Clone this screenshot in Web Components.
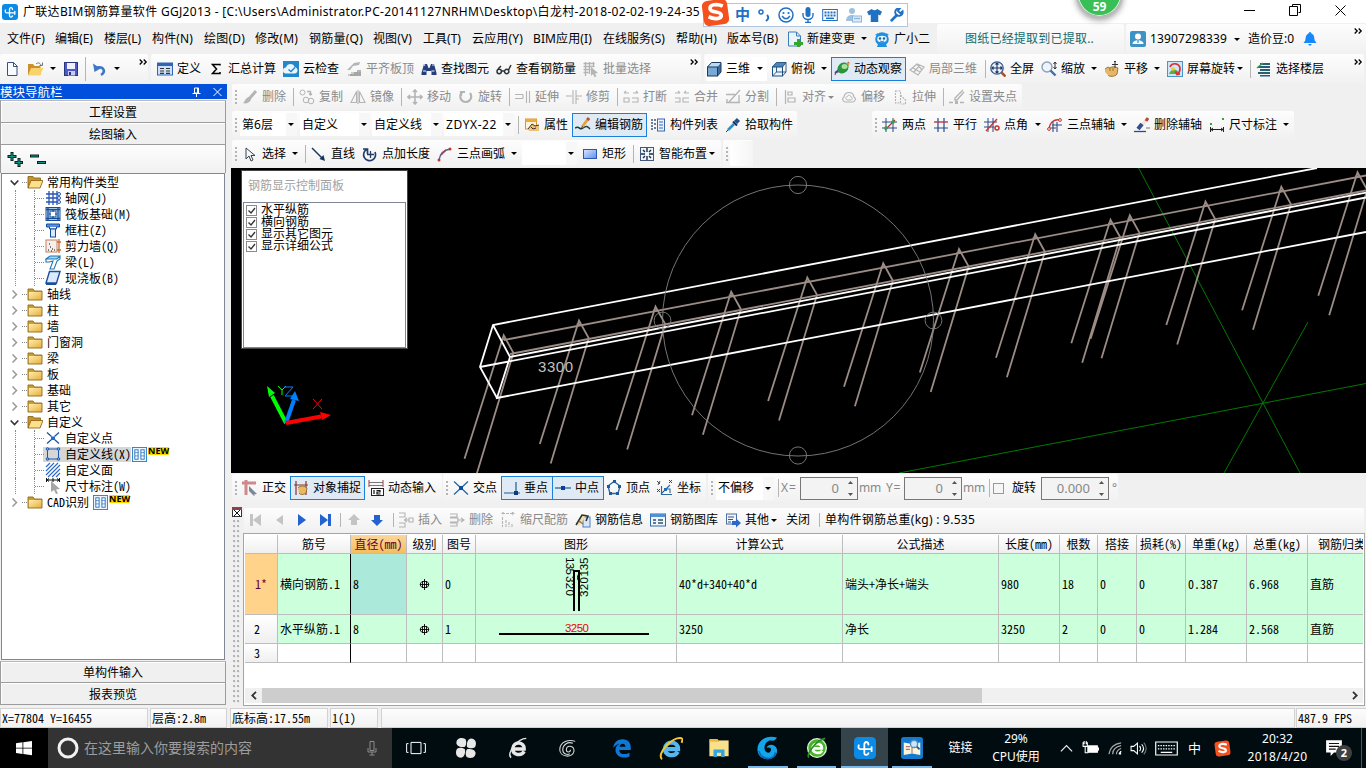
<!DOCTYPE html>
<html lang="zh-CN">
<head>
<meta charset="utf-8">
<title>广联达BIM钢筋算量软件 GGJ2013</title>
<style>
html,body{margin:0;height:100%;overflow:hidden}
body{width:1366px;height:768px;background:#f0f0f0;color:#000;font:12px/16px "Noto Sans","Noto Sans CJK SC",sans-serif}
</style>
</head>
<body>
<app-window></app-window>
<script>
/* ---------- icon library: 16x16 artwork ---------- */
const S=(d,c='#222',w=1.3,x='')=>`<path d="${d}" fill="none" stroke="${c}" stroke-width="${w}" ${x}/>`;
const F=(d,c)=>`<path d="${d}" fill="${c}" fill-rule="evenodd"/>`;
const R=(x,y,w,h,f,s='none')=>`<rect x="${x}" y="${y}" width="${w}" height="${h}" fill="${f}" stroke="${s}"/>`;
const C=(x,y,r,f='none',s='none',w=1)=>`<circle cx="${x}" cy="${y}" r="${r}" fill="${f}" stroke="${s}" stroke-width="${w}"/>`;
const G='#b4b4b4',B='#2a4a8c',RD='#c8342c';
const ICONS={
 app:`<rect width="16" height="16" rx="3" fill="#0b8ae6"/>`+S('M10.500 5.500C10.500 3 7.500 3 7.500 5.500v6c0 2 2.500 2 3 .3M3.500 6c-.8 1.500 0 2.800 1.500 2.800h7.500M12.800 7.300v3','#fff',1.3,'stroke-linecap="round"'),
 new:F('M2.500 1.500h7l4 4v9.500h-11z','#f7faff')+S('M3.500 1.500h6l3.500 3.500v9.500h-9.500z','#3c4f78',1)+S('M9.500 1.500v4h4','#3c4f78',1),
 open:F('M0 3h5l1.500 2h6v9H0z','#c9902f')+F('M3 7h12.500L12 14.500H0z','#f8d36c')+S('M8 3c2-2 4-1 5 1M14.500 1.500v3h-3','#6b7787',1),
 save:R(1.5,1.500,13,13,'#4d5cc4','#29367f')+R(4,2,8,6,'#eef0ff')+R(5,10,7,4.500,'#c7cdf2')+R(6,11,2,3,'#29367f'),
 undo:S('M9 14c5-3 3-9-4-7.500','#3d76c9',2.6)+F('M1 2.500l1.500 8.500 6-3.500z','#3d76c9'),
 def:R(.5,2,15,12,'#cfe0fa','#2f66b4')+R(1,2,14,3,'#2f66b4')+S('M3 7.500h4M3 10h4M3 12.300h4M9 7.500h4M9 10h4M9 12.300h4','#333',1.2),
 sigma:S('M12 4.500v-1H4.500l4 4.500-4 4.500H12v-1.500','#000',1.5),
 cloud:R(0,0,16,16,'#2387cc')+F('M3 12.500a3 3 0 010-6c1-4.500 8-4.500 8.500-.5 4 .5 4 6.500 0 6.500z','#e9f6ff')+S('M5.500 8.500l2.500 2 4-4','#2387cc',1.5),
 flat:F('M1 9l7-7 6-1-1 3-6 1-3 4zM4 15h11V9H11v2H8v2H4z',G)+S('M2 14h13M5 12h10','#8f8f8f',.8),
 binoc:F('M3 3h3l1.500 4h1L10 3h3l2.500 9v2h-5v-4h-5v4H.5v-2z','#263f7c')+S('M3.500 3v2M12 3v2M2 10h3M10.500 10h3','#a9bbe5',1.3),
 glass:S('M1 10.500a2.200 2.200 0 104.400 0 2.200 2.200 0 10-4.400 0M8.500 10.500a2.200 2.200 0 104.400 0 2.200 2.200 0 10-4.400 0M5.400 10h3.100M2 8l3-3M12.500 9l2.500-5','#2c3338',1.5),
 batch:S('M.5 2.500h11M.5 5.500h11M.5 8.500h7M.5 11.500h5M2.500 1v14M6.500 1v12M10.500 1v5',G)+F('M8 6l7 6-3 .5 1.500 3-2 .5-1.500-3-2 2z',G),
 cube:F('M1 6l4-4.500h10L11.500 6z','#b9dcf5')+F('M11.500 6L15 1.500v9.500L11.500 15z','#3a6d9e')+R(1.5,6,10,9,'#79aad5','#1d3a5c')+S('M1.500 6l4-4.500H15v9.500L11.500 15','#1d3a5c',1),
 cubeo:F('M1 6l4-4.500h10L11.500 6z','#4a86bd')+R(1.5,6,10,9,'#e8f3fb','#1f4e7a')+S('M1.500 6l4-4.500H15v9.500L11.500 15M11.500 6L15 1.500M5.500 6v5l-4 4M5.500 11H15','#1f4e7a',.9),
 orbit:S('M1 14c1-6 6-1 10-5s3-7 4-8','#c23a3a',1.2)+S('M1 12l5-4','#354f93',2)+`<ellipse cx="9" cy="7" rx="5" ry="6" transform="rotate(45 9 7)" fill="#2b9440"/><ellipse cx="10.500" cy="5.500" rx="3" ry="2.500" fill="#a8e29b"/>`+S('M13 1.500l2 2','#d3a23a',2),
 orbitd:S('M1 9l7-6 7 3-6 8zM4 7l7 4M8 3l5 6M5 11l6-7',G,1.2),
 full:C(7,7,6.2,'#e6f0fb','#37578d',1.3)+S('M7 2v10M2 7h10M5.500 3.500L7 2l1.500 1.500M5.500 10.500L7 12l1.500-1.500M3.500 5.500L2 7l1.500 1.500M10.500 5.500L12 7l-1.500 1.500','#24365f',1.1)+S('M11.500 11.500l4 4','#a5552c',2.5),
 zoom:C(6,6,5,'#edf5fc','#8ea0b5',1.4)+S('M9.500 9.500l5 5','#3b6fb5',2.4)+S('M14 1v7M12.500 3L14 1l1.500 2M12.500 6L14 8l1.500-2','#333',1),
 pan:F('M1 8l3-2 2 1c2-2 6-1 8 0l-1 6c-2 3-8 3-9 1L1 11z','#e5b766')+S('M1 8l3-2 2 1c2-2 6-1 8 0l-1 6c-2 3-8 3-9 1M6 7v3M9 7v3','#95692a',.9)+S('M11 0v7M8 3.500h6M10 1l1-1 1 1','#333',1),
 rot:R(.5,.5,15,15,'#cfe6f7','#4b94c9')+F('M2 13c2-6 8-6 11 0z','#5aac49')+C(6,8,1.800,'#f3c438')+S('M3 6c2-5 10-4 10 2 0 3-1 4-3 5M8.500 10.500l1.500 3 3-.5','#d93535',1.7),
 floor:F('M4 2h10v2H4zM2 5h12v2H2zM4 8h10v2H4zM2 11h12v2H2zM4 14h10v1.500H4z','#285f73')+S('M1 7l6-5','#3aa04a',1.5),
 brush:S('M14 2L7 10',G,3)+F('M7 8l2 3c-2 3-5 4-8 3 2-1 2-5 6-6z',G),
 copy:C(3.5,3.500,2.500,'none',G)+C(7,11,2.800,'none',G)+C(12,12,2.800,'none',G)+S('M8 2.500h3.500V6M10 4.500L11.500 6 13 4.500',G),
 mirror:S('M6.500 2.500v11H1zM9.500 2.500v11H15zM8 1v14',G,1.1),
 move:S('M8 1v14M1 8h14M6 3l2-2 2 2M6 13l2 2 2-2M3 6L1 8l2 2M13 6l2 2-2 2',G,1.6),
 rotate:S('M4 3.500A5.500 5.500 0 1012 4M3 7V3h4',G,2.2),
 extend:S('M0 5.500h8M0 9.500h8M8 5.500v4M11.500 2v12M14.500 2v12',G,1.1),
 trim:S('M0 7h6M7 1v14M10 1v14M10 7h6M10 10h3',G,1.1),
 brk:S('M1 4h5M1 4l2-2M15 4h-5M15 4l-2-2M1 9h5v4H1zM9 9h6v4H9',G,1.1),
 join:S('M1 4h5M6 4L4 2M15 4h-5M10 4l2-2M1 9h5v4H1M15 9H9v4h6',G,1.1),
 split:S('M1 5.500h9M1 13.500h14M2 13v-3M14 6v7M15 1L4 13',G,1.3),
 align:S('M3.500 1v14M6 3h4v3H6zM6 9h7v4H6z',G,1.2),
 offset:S('M4 13h8c3-1 3-4 1-5-1-6-9-6-10 0-2 1-2 4 1 5z',G,1.2)+S('M6 11h4c2-1 1-3 0-3-.5-2.500-3.500-2.500-4 0-1 0-2 2 0 3z',G,1),
 stretch:S('M3.500 2h5v12h-5zM8.500 6l5 5v4h-5',G,1.1,'stroke-dasharray="2 1"'),
 grip:S('M14 1L6 9v2h2l7-8',G,1.4)+R(6,12,3,3,G)+S('M0 13.500h4M11 13.500h4',G),
 prop:R(1.5,2,11,10,'#fff3d8','#d89530')+R(1.5,2,11,3,'#f4a83a')+F('M4 12l4-5 3 2 4-1v6H5z','#efc27c')+S('M4 12l4-5 3 2 4-1M7 10l2 2 3-1','#3c3325',1),
 edit:S('M0 11c5-3 4 3 8 0s5-1 7 1','#223b35',1.5)+S('M13 2L7 10','#e1a43b',2.8)+S('M14 1l-1.500 2','#b44c3d',3)+S('M7.500 9.500L6 12','#333',1),
 list:S('M1 3h2M1 6h2M1 9h2M1 12h2M4 3h2M4 7h2M4 11h2','#3b5680',1.5)+R(7.5,2,7,12,'#eaf3ff','#3b68aa')+S('M9 5h4M9 8h4M9 11h4','#3b68aa',1),
 pick:S('M3 13L9 7','#2f8fcd',2.6)+S('M8 4.500l4 4','#1c3357',2)+S('M10.500 5.500L13.500 2.500','#26508c',4.500)+S('M1 15l2-2','#333',1),
 ax2:S('M0 5h15M0 11h15M4 1v14M11 1v14',B,1)+S('M3 13L13 3','#a63838',1.2)+C(4,11,1.800,'#33a03c')+C(11,5,1.800,'#33a03c'),
 axp:S('M1 11h14M5 1v14M11 1v14',B,1.2)+S('M1 5h14','#b23c48',1.4),
 axa:S('M0 5h13M0 10h10M4 1v14M9 1v14',B,1)+S('M2 14L13 2',RD,1.3)+C(13,11,2,'none',RD,1.5),
 ax3:S('M5 8h10M1 11h8M6 4v11M10 5v10',B,1.1)+S('M2 12C3 5 7 2 13 3',RD,1.4)+C(2,12,1.400,'#fff',RD)+C(13,3,1.400,'#fff',RD),
 axd:S('M13 2L7 9','#f1e4d4',3)+S('M14 1l-2 3','#b7463a',3)+S('M8 7l-4 5','#314e93',4)+S('M0 14.500h12',B,1.3)+S('M12 11h4','#777',1),
 dim:S('M1.500 10v5M14.500 10v5M2 12.500h12M4 11l-2 1.500L4 14M12 11l2 1.500-2 1.500','#222',1)+R(1,6,2,2,'#35a442')+R(13,1,2,2,'#35a442'),
 cursor:S('M4 2v11l3-3 2 5 2-1-2-4.500h4z','#39424f',1),
 line:S('M1 2l11 11','#17355a',1.4)+F('M14 15L8.500 13l4-4z','#17355a'),
 addlen:S('M4.500 3.500A6 6 0 1013 6M1 3h4.500v5','#243c6a',1.7)+S('M8.500 5v7M5 8.500h7','#243c6a',1.3),
 arc:S('M2 14C3 8 6 4 13 3','#3a6bb0',1.4)+S('M4 9L9 4',RD,1.4)+C(2,14,1.500,RD)+C(13,3,1.500,RD),
 rect:`<defs><linearGradient id="g" x2="1" y2="1"><stop stop-color="#dce9ff"/><stop offset="1" stop-color="#5a8df0"/></linearGradient></defs>`+R(1.5,3.500,13,9,'url(#g)','#2d57b3'),
 smart:R(1.5,1.500,13,13,'#eef4fb','#43597c')+S('M8 2v4M8 10v4M2 8h4M10 8h4M4 4l2 2M12 4l-2 2M4 12l2-2M12 12l-2-2','#1c2b44',1.4),
 ortho:S('M0 3h14M4 0v15','#d0898a',3)+F('M7 6l8 8-3 .5 1 2-2-1.500L7 11z','#7a8899'),
 snap:S('M1 5h14M3 1v14M13 1v14','#8a3030',1.2)+F('M5 8c2-3 7-2 9 0l-1 5c-2 2-6 2-7 0z','#e8b95d')+S('M5 8c2-3 7-2 9 0l-1 5c-2 2-6 2-7 0','#87642e',.8),
 dyn:S('M1 0v7M15 0v7','#9a3a3a',1)+S('M1 2.500h14M1 5.500h14','#777',1)+R(3.5,8.500,12,7,'#fff','#222')+S('M6 10v4M8.500 10.500h3.500v1.500H9v2h3.500','#111',1.2),
 cross:S('M1 1.500l14 13M15 1.500L1 14.500','#26639d',1.2)+R(6,6,4,4,'#0d4da3'),
 perp:S('M0 13h16M12 2v11','#1d5a96',1.2)+R(10,11,4,4,'#0d3c7d'),
 mid:S('M0 8h16','#1d5a96',1.2)+R(6,6,4,4,'#0d3c9d'),
 vert:S('M8 1.500l6 4.500-2 7.500H4L2 6z','#2f669c',1.3)+R(7,0,3,3,'#1d5a96')+R(1,5,3,3,'#1d5a96')+R(12,5,3,3,'#1d5a96')+R(3,12,3,3,'#1d5a96')+R(10,12,3,3,'#1d5a96'),
 coord:S('M4.500 6v8.500H15M4 14L13 5M8 9h5v4','#2f669c',1.1)+S('M0 1l3 3M3 1L1 5M0 9l3 3M3 9l-3 3M12 0l3 3M15 0l-3 3','#333',.9)+R(7,8,3,3,'#236cb4'),
 first:F('M3 2h3v12H3zM14 2v12L6 8z','#c4c4c4'), prev:F('M12 3v10L5 8z','#c4c4c4'),
 next:F('M4 2v12l8-6z','#2463cf'), last:F('M2 2v12l8-6zM10 2h3v12h-3z','#2463cf'),
 up:F('M8 2l6 6h-3v5H5V8H2z','#c4c4c4'), down:F('M8 14l6-6h-3V3H5v5H2z','#2463cf'),
 ins:S('M1 1h6v4H1M1 11h6v4H1M6 8h5M9 6L6.500 8 9 10M11 6h4v4h-4z',G,1.1),
 del:S('M1 2h7v3H1M1 11h7v3H1M1 6h8v4H1M8 8h7M12 6l3 2-3 2',G,1.2),
 scale:S('M2 1.500h12M3.500 0L2 1.500 3.500 3M12 0l2 1.500L12 3M2.500 5v10M6 8v7M9 10v5M12 12v3',G,1.1,'stroke-dasharray="3 1"'),
 info:R(8,5,7,10,'#d7e6fb','#4e7fc0')+F('M1 12l5-9 5-1-2 5-5 7z','#f2dfaf')+S('M1 13L7 3l6 1-2 5','#26322f',1.5)+S('M4 9l4 3','#b66b29',1.5),
 lib:R(.5,2,15,12,'#edf5ff','#3469a8')+R(.5,2,15,3,'#5291d8')+S('M3 8h3M3 11h3M8 8h5M8 11h5','#356',1.3),
 other:R(1.5,2,10,10,'#eef5ff','#4a6fa0')+S('M3 5h6M3 7.500h5M3 10h3','#456',1)+F('M7 9h4V6.500L16 11l-5 4.500V13H7z','#2c68ca'),
 newchg:F('M1.500 1h8l4 4v10h-12z','#e9f4ff')+S('M1.500 1h8l4 4v10h-12zM9.500 1v4h4','#3c7cb8',1)+F('M10 8h3v3h3v3h-3v3h-3v-3H7v-3h3z','#35a828'),
 robot:C(8,8,6.800,'#1f8fe0')+F('M1 4l3-2 1 3zM15 4l-3-2-1 3zM4 13h8l1 3H3z','#1f8fe0')+`<ellipse cx="8" cy="8" rx="4.800" ry="3.200" fill="#e6f6ff"/>`+C(6,7.500,1.200,'#1763a0')+C(10,7.500,1.200,'#1763a0')+S('M6 10q2 1.500 4 0','#1763a0',.8),
 user:`<rect width="16" height="16" rx="2" fill="#3e93c6"/>`+C(8,5.500,3,'#fff')+F('M2.500 13c0-5 11-5 11 0z','#fff')+S('M8 9v3','#3e93c6'),
 bell:F('M8 1c1 0 1 1 1.500 1.500C13 4 12 8 13 10l1.500 2h-13L3 10c1-2 0-6 3.500-7.500C7 2 7 1 8 1z','#1787fb')+F('M6 13h4l-2 2z','#1787fb'),
 /* tree */
 fold:F('M1 3h5l1.500 2H15v9H1z','#d49b2b')+`<defs><linearGradient id="f" x2="1" y2="1"><stop stop-color="#fff0b0"/><stop offset="1" stop-color="#e5ad35"/></linearGradient></defs>`+F('M1.500 6H15v8H1.500z','url(#f)')+S('M1 3h5l1.500 2H15v9H1z','#8c691e',.9),
 foldo:F('M1 2.500h5L7.500 4h6v10H1z','#c8932d')+F('M4 6.500h12L13 14H1z','#ffe08a')+S('M1 14V2.500h5L7.500 4h6v2.500H16L13 14zM1 14l3-7.500h10','#8c691e',.9),
 grid:S('M1 4h11M1 8h11M1 12h11M4 1v14M8 1v14M12 1v14','#2a55b5',1.3)+C(14,4,1.500,'none','#2a55b5')+C(14,8,1.500,'none','#2a55b5')+C(14,12,1.500,'none','#2a55b5'),
 raft:R(1,1.500,14,13,'#deecff','#134f9b')+R(5,5,6,6,'#fff','#134f9b')+S('M1 3.500h14M1 12.500h14M3 2v12M13 2v12','#134f9b',1.4)+S('M8 4v2M8 10v2M4 8h2M10 8h2','#134f9b',1.2),
 col:F('M1 2h14v3H1z','#5b8ce0')+S('M1.500 2h13v3h-3v2h-7V5h-3z','#134f9b',1)+R(5.5,7,5,8,'#dbe8fc','#134f9b'),
 wall:R(1,2,11,12,'#f5efeb','#c97d64')+S('M3 12h1M5 9h1M7 11h1M4 6h1M9 12h1M6 13h1','#555')+S('M14 1v14M12 4h4M12 12h4','#c26d32',1.3),
 beam:F('M1 5l4-3h10l-3 3z','#9ed5f5')+S('M1 5l4-3h10l-3 3zM1 5v3h3l4-1-3 8h4l3-8 3-2V2','#2078b6',1.1),
 slab:F('M4 2h10l-3 11H1z','#dceaff')+S('M4.500 1.500H15L11.500 13H1z','#1b4f9c',1.4)+F('M1 13h11l-1 2H1z','#1b4f9c'),
 pt:S('M2 2.500l4.500 4M14 2.500l-4.500 4M2 13.500l4.500-4M14 13.500l-4.500-4','#1b4f9c',1.2)+R(6,6.500,4,3.500,'#1b6fc9'),
 ln:R(2.5,3,11,10,'none','#1a58b0')+C(2.5,3,1.300,'#7ab3f0','#1a58b0')+C(13.5,3,1.300,'#7ab3f0','#1a58b0')+C(2.5,13,1.300,'#7ab3f0','#1a58b0')+C(13.5,13,1.300,'#7ab3f0','#1a58b0'),
 sf:S('M1 5l4-4M1 9l8-8M1 13l12-12M3 15L15 3M7 15l8-8M11 15l4-4','#2a6bc0',1.1),
 dimt:S('M1.500 0v4M14.500 0v4M2 2h12M4 .5L2 2l2 1.500M12 .5L14 2l-2 1.500M8 0v4','#111',1)+F('M6 3l9 8-4 .5 2 4-2 .5-2-4-3 2z','#a6a6a6'),
 book:R(.5,.5,15,15,'#eaf5ff','#2f7fc4')+R(3,3,3.500,10,'#fff','#2d73bd')+R(9.500,3,3.500,10,'#fff','#2d73bd')+S('M3 6h3.500M3 9.500h3.500M9.500 6H13M9.500 9.500H13','#2d73bd',.8),
 plus2:S('M5 0v9M.5 4.500h9M12 6v9M7.500 10.500h8.500','#05241f',3)+S('M5 1v7M1.500 4.500h7M12 7v7M8.500 10.500h6.500','#129488',1.200),
 minus2:S('M0 4h9M7 10.500h9','#05241f',3)+S('M1 4h7M8 10.500h7','#129488',1.2),
 /* task bar */
 win:F('M0 3.200l6.500-.9V7.700H0zM7.300 2.200L16 1v6.700H7.300zM0 8.400h6.500v5.500L0 13zM7.300 8.400H16V15.200l-8.700-1.200z','#fff'),
 tview:S('M4 3.500h8v9H4zM2 4.500H.5v7H2M14 4.500h1.500v7H14','#fff',.8),
 fan:F('M1 4.500C1 .5 5 0 7.500 1.500 8.500 3 8.500 6 7 7.300 4.500 7.500 1.500 7 1 4.500zM11.500 1C15.500 1 16 5 14.500 7.500c-1.500 1-4.500 1-5.800-.5C8.500 4.500 9 1.500 11.500 1zM15 11.500c0 4-4 4.500-6.500 3C7.500 13 7.500 10 9 8.700c2.500-.2 5.500.3 6 2.800zM4.500 15C.5 15 0 11 1.500 8.500c1.500-1 4.500-1 5.800.5.2 2.500-.3 5.500-2.800 6z','#e8e8e8'),
 e360w:S('M4 8.700h8.500C13 3.500 4.500 2.500 4.200 8.500c0 5 6.300 5.500 8.300 2','#e8e8e8',2.5)+S('M3 15C-1 12 8 1 14 1','#e8e8e8',1),
 gline:S('M14.500 2c-5-2-13 0-13 7 0 6.500 11 7.500 12 1 0-4.500-6.500-5.500-6.500-1 0 2.500 3.500 2.500 3.500 0M12.500 3.500C8 2 4 5 4 9s4 4.500 6 3.500','#d8d8d8',.9),
 edge:F('M1 8C1.500 3.500 4.500 1 8.500 1c4.500 0 6.500 3 6.500 6.500V9.500H5.800c.2 4 5.200 4 8.200 2.200v3C9 17 3 15 2.800 9.800 2.700 7.300 4 5.500 6 4.500 4 4.800 2.200 6 1 8zM6 7h4.800C10.800 3.900 6.500 3.900 6 7z','#0f78d7'),
 ie:S('M4 8.700h8.700C13 3.500 4.500 2.500 4 8.500c0 5 6.500 5.500 8.500 2','#56b6ee',2.9)+S('M2 15.500C-2 12 9 0 15 1.500c1 .5.5 2 0 3','#f3c736',1.3),
 file:R(1,2.500,14,11.500,'#fbe08c')+F('M1 1.500h6l1 2H1z','#edb83c')+F('M4 14.500V9h8v5.500H9.500v-3h-3v3z','#2fa6e0'),
 gblue:F('M14 1C7-1 1 3 1 9c0 9 14 8 13 0-1-4-6-4-7-1 3-1 4 1 2 3-4 1-5-6 0-8 2 0 3 1 5-2z','#14a4ea')+S('M2 10c1 6 10 7 11 1','#0b66b9',1.2),
 e360:C(8,8,6.800,'#47b429','#dff4d7',1)+S('M4.500 8.300h7C12 4 5 4 4.800 8c0 4 5.200 4.500 7 2','#fff',2)+S('M2 15C0 12 8 2 14 1','#2a8e23',1.2),
 reader:`<rect width="16" height="16" rx="2" fill="#147ad0"/>`+F('M2 4l6 1 6-1v9l-6-1-6 1z','#fff6da')+S('M8 5v7M3.500 7h3M3.500 9h3','#a77',.8)+C(9.5,5,2.600,'#cce7f8','#4a91c8')+S('M11.500 7l2 2','#2a5f96',1.5),
 mic:S('M6 1.500h4v9H6zM4 8v4h8V8M8 12v3M5.500 15h5','#8c8c8c',1),
 chev:S('M2 11l6-6 6 6','#eee',1.3),
 plug:R(5.5,5.500,9,6,'#fff','#fff')+R(15,7,1,3,'#fff')+S('M5 2v4H1V2M3 6v6h3M2 1v3M4 1v3','#fff',1),
 wifi:S('M1 14C2 7 7 3 14 2M5 14c0-5 4-8 9-9M9 14c0-3 2-5 5-6','#aaa',1.3)+S('M12 14c0-1 1-2 2-3M12 13.500h2','#fff',1.600),
 snd:S('M1 6h2.500L7 3v10L3.500 10H1zM9 5.500q2 2.500 0 5M11 4q3.500 4 0 8','#fff',1)+S('M13 2.500q4.500 5.500 0 11','#777',1),
 kbd:S('M.5 3.500h15v9H.5z','#fff',.8)+S('M2 6h12M2 8.300h12','#fff',.9,'stroke-dasharray="1 .8"')+S('M4 10.700h8','#fff',.9),
 sogou:`<rect x="1" y="1" width="14" height="14" rx="3" fill="#f4511e" transform="rotate(-8 8 8)"/>`+S('M12 4.500C9 3 4.500 3.500 5 6c.5 2.500 6 1 6.200 3.500.2 2.200-4 2.500-7 .8','#fff',2),
 note:F('M1 1h14v11H8l-3 3v-3H1z','#fff')+S('M3.500 4h9M3.500 6.500h9M3.500 9h6','#111',1),
 smile:C(8,8,7,'none','#2070c4',1.500)+C(5.500,6,1.100,'#2070c4')+C(10.500,6,1.100,'#2070c4')+S('M4 9q4 5.500 8 0','#2070c4',1.400),
 mic2:`<rect x="5.500" y="0" width="5" height="10" rx="2.500" fill="#2070c4"/>`+S('M3 6v2c0 6 10 6 10 0V6M8 12v4M5 15.500h6','#2070c4',1.400),
 kb2:R(.7,2.500,14.600,11,'none','#2070c4')+S('M2.500 5.500h12M2.500 8.500h12','#2070c4',1.800,'stroke-dasharray="2 1"')+S('M4 11.300h8','#2070c4',1.500),
 usr2:C(6,4,3,'#9ec0e2')+F('M0 14c0-8 11-8 11 0z','#9ec0e2')+R(6.5,9,9,6,'#dcebf8','#8fb4da')+S('M8 11.500h6','#8fb4da'),
 shirt:F('M0 4l5-3q3 3 6 0l5 3-2 4-2-1v8H4V7L2 8z','#2070c4'),
 wrench:S('M2 14l7-7','#2070c4',3)+S('M14.500 3.500a4 4 0 11-3-3l-2 2.500 2.500 2.500z','#2070c4',2)
};
const icon=(n,s=16)=>`<svg class="ic" width="${s}" height="${s}" viewBox="0 0 16 16">${ICONS[n]||''}</svg>`;
const CARET='<svg class="ca" width="6" height="3" viewBox="0 0 6 3"><path d="M0 0h6L3 3z" fill="currentColor"/></svg>';
const FLAT='linear-gradient(#fdfdfd,#f1f1f1)';

function define(name,css,html,after){
  customElements.define(name,class extends HTMLElement{
    connectedCallback(){
      if(this.shadowRoot)return;
      const r=this.attachShadow({mode:'open'});
      r.innerHTML=`<style>*{box-sizing:border-box}svg{display:block;flex:none}${css}</style>${typeof html==='function'?html(this):html}`;
      if(this.hasAttribute('w'))this.style.width=this.getAttribute('w')+'px';
      if(this.hasAttribute('m'))this.style.marginLeft=this.getAttribute('m')+'px';
      if(after)after(this,r);
    }
  });
}
/* adjusts tracking so a label fills the width given by its fit attribute */
function fit(host,node){
  const want=+host.getAttribute('fit'); if(!want)return;
  const n=host.textContent.length, nat=node.getBoundingClientRect().width;
  if(nat)node.style.letterSpacing=((want-nat)/n).toFixed(3)+'px';
}
const isText=el=>el.textContent.trim().length>0;

define('tool-b',`
:host{display:flex;align-items:center;flex:none;height:100%;box-sizing:border-box;white-space:nowrap}
:host([d]){color:#8a8a8a}
:host([on]){border:1px solid #1a80d9;background:#dfeaf5;padding-left:2px;height:24px;align-self:center}
:host([box]){background:#fff}
.t{display:inline-block}.t.p{margin-left:4px}`,
 el=>{const i=el.getAttribute('i');return (i?icon(i):'')+(isText(el)?`<span class="t ${i?'p':''}"><slot></slot></span>`:'')+(el.hasAttribute('c')?`<span style="margin-left:${el.getAttribute('c')}px">${CARET}</span>`:'')},
 (el,r)=>{const t=r.querySelector('.t');if(t)fit(el,t)});
define('fit-text',`:host{display:block;flex:none;white-space:pre}.t{display:inline-block}`,'<span class="t"><slot></slot></span>',(el,r)=>fit(el,r.querySelector('.t')));
define('tool-sep',`:host{display:block;flex:none;height:18px;align-self:center}:host::before{content:"";display:block;width:1px;height:100%;background:#b5b5b5}`,'');
define('tool-grip',`:host{display:flex;flex:none;height:100%;align-items:center;padding-left:3px;box-sizing:border-box}i{width:2px;height:14px;background:repeating-linear-gradient(#b4b4b4 0 2px,transparent 2px 4px)}`,'<i></i>');
define('tool-more',`:host{display:block;flex:none;align-self:flex-start;padding-top:5px}`,`<svg width="9" height="6" viewBox="0 0 9 6"><path d="M.7.500L3.200 3 .7 5.500M4.700.500L7.200 3 4.700 5.500" fill="none" stroke="#000" stroke-width="1.300"/></svg>`);
define('tool-combo',`:host{display:flex;flex:none;box-sizing:border-box;height:23px;align-self:center;background:#fff;align-items:center;padding-left:2px;white-space:nowrap}.t{display:inline-block}b{margin-left:auto;width:11px;height:100%;background:#f7f7f7;display:flex;align-items:center;justify-content:flex-start;padding-left:2px}`,
 `<span class="t"><slot></slot></span><b>${CARET}</b>`,(el,r)=>fit(el,r.querySelector('.t')));
define('tool-spin',`:host{display:flex;flex:none;box-sizing:border-box;height:23px;align-self:center;border:1px solid #777;background:#f3f3f3;color:#888;align-items:center;justify-content:flex-end}
.t{margin-right:9px;font-size:13px}.a{display:flex;flex-direction:column;gap:9px;margin-right:4px}`,
 `<span class="t"><slot></slot></span><span class="a"><svg width="5" height="3"><path d="M0 3h5L2.500 0z" fill="#555"/></svg><svg width="5" height="3"><path d="M0 0h5L2.500 3z" fill="#555"/></svg></span>`);
define('tool-panel',`:host{display:flex;align-items:center;flex:none;height:100%;background:${FLAT};box-sizing:border-box;border-radius:2px}`,'<slot></slot>');
define('tool-row',`:host{display:flex;flex:none;box-sizing:border-box}`,'<slot></slot>',el=>{el.style.height=el.getAttribute('h')+'px'});

/* ---------- title bar ---------- */
define('title-bar',`:host{display:flex;position:relative;height:23px;background:#fff;align-items:center;flex:none}
.app{margin:0 5px 0 2px}.win{display:flex;margin-left:auto;margin-right:20px;gap:34px;align-items:center;margin-top:-3px}
.ime{position:absolute;z-index:3;left:703px;top:3px;width:205px;height:24px;background:#fff;border:1px solid #b3c7de;display:flex;align-items:center;color:#2070c4}
.ime .s{margin:-5px 5px 0 -3px}.ime .z{font:bold 15px/16px "Noto Sans CJK SC";margin-right:8px;margin-top:-2px}
.ball{position:absolute;z-index:3;left:1076px;top:-29px;width:47px;height:47px;box-sizing:border-box;border-radius:50%;border:2px solid #b9bcb9;background:#38bf55;box-shadow:0 0 0 1px #eee inset,0 2px 6px #0006;color:#fff;font-weight:bold;display:flex;justify-content:center;padding-top:26px}`,
`<span class="app">${icon('app')}</span><fit-text fit="677">广联达BIM钢筋算量软件 GGJ2013 - [C:\\Users\\Administrator.PC-20141127NRHM\\Desktop\\白龙村-2018-02-02-19-24-35</fit-text>
<div class="win"><svg width="11" height="11"><path d="M0 5.500h11" stroke="#000"/></svg><svg width="12" height="12"><path d="M3.500 2.500v-2h8v8h-2M.5 2.500h8v9h-8z" fill="none" stroke="#000"/></svg><svg width="11" height="11"><path d="M.5.500l10 10M10.500.500l-10 10" stroke="#000"/></svg></div>
<div class="ime"><span class="s">${icon('sogou',29)}</span><span class="z">中</span><svg width="12" height="16" style="margin-right:8px"><circle cx="3" cy="5" r="2" fill="none" stroke="#2070c4" stroke-width="1.500"/><path d="M9 8q3 3-1 6" stroke="#2070c4" stroke-width="2" fill="none"/></svg>${icon('smile')}<span style="width:6px"></span>${icon('mic2')}<span style="width:6px"></span>${icon('kb2')}<span style="width:8px"></span>${icon('usr2')}<span style="width:5px"></span>${icon('shirt',15)}<span style="width:7px"></span>${icon('wrench',15)}</div>
<div class="ball">59</div>`);

define('menu-bar',`:host{display:flex;flex:none;height:31px;align-items:center;padding-left:7px}
tool-panel{height:30px;margin-top:1px}.q{color:#0f6b6b}`,()=>{
 const m=[['文件(F)',48,38],['编辑(E)',49,38],['楼层(L)',48,37],['构件(N)',52,41],['绘图(D)',51,41],['修改(M)',54,43],['钢筋量(Q)',64,54],['视图(V)',50,39],['工具(T)',49,38],['云应用(Y)',61,51],['BIM应用(I)',70,59],['在线服务(S)',73,62],['帮助(H)',51,41],['版本号(B)',60,51]];
 return m.map(a=>`<tool-b w="${a[1]}" fit="${a[2]}">${a[0]}</tool-b>`).join('')+
 `<tool-b i="newchg" w="87" c="6">新建变更</tool-b><tool-b i="robot" w="63">广小二</tool-b>
 <tool-panel w="187"><tool-b class="q" m="28" fit="129">图纸已经提取到已提取..</tool-b></tool-panel>
 <tool-panel m="2" w="240"><tool-b m="4" w="118" i="user" fit="77" c="7">13907298339</tool-b><tool-b fit="46" w="54">造价豆:0</tool-b><tool-b i="bell" w="52"></tool-b><tool-more w="9" style="padding-top:4px"></tool-more></tool-panel>`});

define('main-tools',`:host{display:flex;flex:none;height:30px}tool-row{padding-bottom:1px}`,
`<tool-row h="30"><tool-panel w="148"><tool-b m="4" i="new" w="24"></tool-b><tool-b i="open" c="6" w="35"></tool-b><tool-b i="save" w="22"></tool-b><tool-sep style="height:24px" w="7"></tool-sep><tool-b i="undo" c="6" w="47"></tool-b><tool-more></tool-more></tool-panel>
<tool-panel m="3" w="550"><tool-b m="6" i="def" w="51">定义</tool-b><tool-b i="sigma" w="75">汇总计算</tool-b><tool-b i="cloud" w="63">云检查</tool-b><tool-b d i="flat" w="75">平齐板顶</tool-b><tool-b i="binoc" w="75">查找图元</tool-b><tool-b i="glass" w="87">查看钢筋量</tool-b><tool-b d i="batch" w="107">批量选择</tool-b><tool-more></tool-more></tool-panel>
<tool-panel m="3" w="660"><tool-b m="2" box i="cube" c="7" w="61" style="height:24px">三维</tool-b><tool-b m="4" i="cubeo" c="6" w="60">俯视</tool-b><tool-b on i="orbit" w="75">动态观察</tool-b><tool-b m="3" d i="orbitd" w="76">局部三维</tool-b><tool-sep w="5"></tool-sep><tool-b i="full" w="51">全屏</tool-b><tool-b i="zoom" c="6" w="63">缩放</tool-b><tool-b i="pan" c="6" w="63">平移</tool-b><tool-b i="rot" c="2" w="83">屏幕旋转</tool-b><tool-sep w="6"></tool-sep><tool-b i="floor" w="98">选择楼层</tool-b><tool-more></tool-more></tool-panel></tool-row>`);

define('edit-tools',`:host{display:flex;flex-direction:column;flex:none;height:84px}tool-row{margin-bottom:1px}tool-row+tool-row{margin-bottom:2px}tool-row:last-of-type{margin:0}`,
()=>{const t=(i,l,w=51,x='')=>`<tool-b i="${i}" w="${w}" ${x}>${l}</tool-b>`,d=(i,l,w=51,x='')=>t(i,l,w,'d '+x),s='<tool-sep w="6"></tool-sep>',g='<tool-grip w="10"></tool-grip>';
return `<tool-row h="26"><tool-panel w="790">${g}${d('brush','删除')}${s}${d('copy','复制')}${d('mirror','镜像')}${s}${d('move','移动')}${d('rotate','旋转')}${s}${d('extend','延伸')}${d('trim','修剪')}${s}${d('brk','打断')}${d('join','合并')}${d('split','分割')}${s}${d('align','对齐',59,'c="2"')}${d('offset','偏移')}${d('stretch','拉伸')}${s}${d('grip','设置夹点',73)}</tool-panel></tool-row>
<tool-row h="27"><tool-panel w="565"><tool-grip w="8"></tool-grip><tool-combo w="57" fit="31">第6层</tool-combo><tool-combo m="3" w="70">自定义</tool-combo><tool-combo m="2" w="70">自定义线</tool-combo><tool-combo m="2" w="70" fit="51">ZDYX-22</tool-combo><tool-sep m="4" w="6"></tool-sep>${t('prop','属性',48)}${t('edit','编辑钢筋',75,'on')}${t('list','构件列表',75,'m="3"')}${t('pick','拾取构件',72)}</tool-panel>
<tool-panel m="75" w="422">${g}${t('ax2','两点')}${t('axp','平行')}${t('axa','点角',63,'c="7"')}${t('ax3','三点辅轴',87,'c="6"')}${t('axd','删除辅轴',75)}${t('dim','尺寸标注',85,'c="6"')}</tool-panel></tool-row>
<tool-row h="27"><tool-panel w="489">${g}${t('cursor','选择',63,'c="6"')}${s}${t('line','直线')}${t('addlen','点加长度',75)}${t('arc','三点画弧',85,'c="6"')}<tool-combo w="55"></tool-combo>${t('rect','矩形',51,'m="5"')}${s}${t('smart','智能布置',81,'c="2"')}</tool-panel><tool-panel m="2" w="30"><tool-grip w="7"></tool-grip><span style="width:23px;height:25px;background:linear-gradient(90deg,#fff,#f5f5f5)"></span></tool-panel></tool-row>`});

/* ---------- module navigator ---------- */
define('module-nav',`:host{display:flex;flex-direction:column;flex:none;width:227px;height:622px;background:#f0f0f0;font-family:"Noto Sans CJK SC",sans-serif;font-feature-settings:"hwid"}
header{height:15px;background:#0050dc;color:#fff;display:flex;align-items:center;flex:none;font-size:12.500px}
header .g{margin-left:auto;display:flex;gap:12px;padding-right:5px}
.bar{height:22px;flex:none;border:1px solid #9c9c9c;border-top-color:#b8b8b8;margin-top:0;width:226px;display:flex;align-items:center;justify-content:center;box-shadow:inset 1px 1px #fff;background:#f0f0f0}
.bar+.bar{border-top:0}
.mini{height:28px;width:226px;border:1px solid #9c9c9c;border-width:0 1px;background:${FLAT};flex:none;display:flex;gap:7px;padding:7px 0 0 6px}
.tree{flex:1;width:224px;margin-left:1px;border:1px solid #7f8794;background:#fff;overflow:hidden}
.r{height:16px;display:flex;align-items:center;white-space:nowrap}
.ch{width:12px;margin-left:6px;display:flex;justify-content:center}
.st{width:5px;border-top:1px dotted #888;margin-left:2px}.lead{width:10px;margin-left:32px;height:16px;border-left:1px dotted #888;display:flex;align-items:center;position:relative}
.lead::before{content:"";width:9px;border-top:1px dotted #888}
.lead::after{content:"";position:absolute;left:-20px;top:0;height:16px;border-left:1px dotted #888}
.l{display:flex;align-items:center;gap:4px;padding-left:2px;height:15px}.l.p{padding-left:0}.l svg{flex:none}.sel{background:#d6d6d6}
.new{font:bold 9px/8px "Noto Sans","Noto Sans CJK SC";font-feature-settings:normal;background:#ffd800;border-radius:1px;margin:-7px 0 0 1px;letter-spacing:.1px}`,
()=>{
 const rows=[['o','常用构件类型'],['grid','轴网(J)'],['raft','筏板基础(M)'],['col','框柱(Z)'],['wall','剪力墙(Q)'],['beam','梁(L)'],['slab','现浇板(B)'],['f','轴线'],['f','柱'],['f','墙'],['f','门窗洞'],['f','梁'],['f','板'],['f','基础'],['f','其它'],['o','自定义'],['pt','自定义点'],['ln','自定义线(X)',1],['sf','自定义面'],['dimt','尺寸标注(W)'],['f','CAD识别',1]];
 const tree=rows.map(([k,t,n])=>{
  const ex=n?`${icon('book',15)}<span class="new">NEW</span>`:'';
  if(k==='o'||k==='f')return `<div class="r"><span class="ch"><svg width="9" height="9">${k==='o'?'<path d="M.7 2.500l3.800 4 3.800-4" fill="none" stroke="#333" stroke-width="1.600"/>':'<path d="M2.500.500l4 4-4 4" fill="none" stroke="#999" stroke-width="1.500"/>'}</svg></span><span class="st"></span><span class="l p">${icon(k==='o'?'foldo':'fold')}<span>${t}</span></span><span style="width:4px"></span>${ex}</div>`;
  return `<div class="r"><span class="ch" style="display:none"></span><span class="lead"></span><span class="l ${n?'sel':''}" style="margin-left:-1px">${icon(k)}<span>${t}</span></span>${n?'<span style="width:1px"></span>':''}${ex}</div>`}).join('');
 return `<header><span>模块导航栏</span><span class="g"><svg width="9" height="10"><path d="M2.500 1h4v5h-4zM5.500 1v5M.5 6.500h8M4.500 6v4" fill="none" stroke="#fff"/></svg><svg width="9" height="10"><path d="M.5 1l8 8M8.500 1l-8 8" stroke="#fff"/></svg></span></header>
 <div class="bar" style="margin-top:1px;height:23px">工程设置</div><div class="bar">绘图输入</div><div class="mini">${icon('plus2')}${icon('minus2')}</div><div class="tree">${tree}</div><div class="bar" style="margin-top:1px">单构件输入</div><div class="bar" style="margin-bottom:1px">报表预览</div>`});

/* ---------- 3D view ---------- */
define('model-view',`:host{display:block;position:relative;flex:none;width:1135px;height:305px;background:#000}
.cp{position:absolute;left:10px;top:2px;width:167px;height:179px;background:#fff;border:1px solid #444;display:flex;flex-direction:column}
.h{height:31px;flex:none;color:#a2a2a2;display:flex;align-items:center;padding:0 0 2px 6px}
.b{flex:1;border:1px solid #7f8794;margin:0 1px 0 1px;padding:1px 0 0 2px}
.b div{height:12px;line-height:12px;display:flex;align-items:center;gap:4px}
.b svg{border:1px solid #8b8b8b}`,()=>{
 const st=[[503.7,335.3],[579,320.5],[655.5,306.5],[731.2,291.7],[807.3,277.4],[883.2,263.2],[959,249],[1035.2,234.2],[1110.5,219.7],[1129.800,215.3],[1205.5,201.6],[1281.3,186.8],[1357.500,172.300]];
 const legs=st.map(([x,y])=>`M${x-39.2} ${y+123.5}L${x} ${y}L${x+9.7} ${y+17.500}L${x-28.300} ${y+143}M${x-2.500} ${y+4}h5`).join('');
 const ck='<svg width="11" height="11"><path d="M1.500 4.500l2.500 2.500 4-5" fill="none" stroke="#333" stroke-width="1.300"/></svg>';
 return `<svg width="1135" height="305" viewBox="231 168 1135 305"><g fill="none">
 <g stroke="#007a00"><path d="M1138.600 168L1300 473M1308 322L1224 473M899 473L1366 383.500"/></g>
 <g stroke="#9b8c85" stroke-width="1.800"><path d="M504 340L1366 175.500M510 354L1366 190.500"/><path d="${legs}"/></g>
 <g stroke="#fff" stroke-width="1.800"><path d="M497 398L480 367L493 325L1317 168M493 325L510 357L1366 192.700M480 367L1366 197.500M510 357L497 398L1366 232"/></g>
 <g stroke="#808080" stroke-width=".9"><circle cx="798" cy="320.500" r="135.500"/><circle cx="798" cy="185" r="8.600"/><circle cx="798" cy="455.500" r="8.600"/><circle cx="933.500" cy="320.500" r="8.400"/><circle cx="662.500" cy="320.500" r="8.400"/></g></g>
 <text x="538" y="372" font-family="Liberation Sans" font-size="15" fill="#c0c0c0" textLength="35">3300</text>
 <path d="M286 423L272 396" stroke="#0f0" stroke-width="4"/><path d="M267 386l8 7-6 4z" fill="#0f0"/>
 <path d="M286 423L294 400" stroke="#0080ff" stroke-width="4"/><path d="M295 391l4 10-9-2z" fill="#0080ff"/>
 <path d="M286 423L321 416.500" stroke="#f00" stroke-width="4"/><path d="M331 415l-11-3 2 8z" fill="#f00"/>
 <path d="M278 386l4 4 4-4M282 390v5" fill="none" stroke="#0f0"/><path d="M284 387h9l-8 9h8" fill="none" stroke="#0080ff"/><path d="M313 399l9 10M322 399l-9 10" stroke="#f00"/></svg>
 <div class="cp"><div class="h">钢筋显示控制面板</div><div class="b"><div>${ck}水平纵筋</div><div>${ck}横向钢筋</div><div>${ck}显示其它图元</div><div>${ck}显示详细公式</div></div></div>`});

define('snap-tools',`:host{display:flex;flex:none;height:29px;padding-top:1px;box-sizing:border-box}.x{color:#888}.k{width:11px;height:11px;border:1px solid #999;margin-right:8px;background:#f6f6f6}`,
`<tool-row h="28"><tool-panel w="210"><tool-grip w="10"></tool-grip><tool-b i="ortho" w="48">正交</tool-b><tool-b on i="snap" w="75">对象捕捉</tool-b><tool-b m="3" i="dyn">动态输入</tool-b></tool-panel>
<tool-panel m="1" w="263"><tool-grip w="10"></tool-grip><tool-b i="cross" w="48">交点</tool-b><tool-b on i="perp" w="52">垂点</tool-b><tool-b on m="-1" i="mid" w="52">中点</tool-b><tool-b m="2" i="vert" w="51">顶点</tool-b><tool-b i="coord">坐标</tool-b></tool-panel>
<tool-panel m="2" w="410"><tool-grip w="8"></tool-grip><tool-combo w="58">不偏移</tool-combo><tool-sep m="4" w="3"></tool-sep><tool-b class="x" w="19" fit="16">X=</tool-b><tool-spin w="58">0</tool-spin><tool-b class="x" m="1" w="27" fit="22">mm</tool-b><tool-b class="x" w="18" fit="15">Y=</tool-b><tool-spin w="58">0</tool-spin><tool-b class="x" m="1" w="26" fit="22">mm</tool-b><tool-sep w="4"></tool-sep><span class="k"></span><tool-b w="29">旋转</tool-b><tool-spin w="68">0.000</tool-spin><tool-b class="x" m="3">°</tool-b></tool-panel></tool-row>`);

/* ---------- rebar table ---------- */
define('rebar-grid',`:host{display:flex;flex-direction:column;width:1122px;height:173px;border:1px solid #a5a5a5;background:#fff;padding:1px 0 0 1px;flex:none;overflow:hidden;box-sizing:border-box;font-family:"Noto Sans CJK SC",sans-serif;font-feature-settings:"hwid"}
.g{display:grid;width:1118px;grid-template-columns:33px 73px 56px 36px 33px 201px 166px 156px 61px 38px 39px 49px 61px 61px 55px;grid-template-rows:19px 61px 29px 19px}
.g div{border-right:1px solid #bdbdbd;border-bottom:1px solid #bdbdbd;display:flex;align-items:center;padding-left:2px;white-space:nowrap;overflow:hidden;background:#ccffdb}
.g div:nth-child(15n){border-right:0}
.g div:nth-child(-n+15),.g div:nth-child(15n+1){background:linear-gradient(#fff,#efefef);justify-content:center;padding:0}
.g div:nth-child(15n+1){padding-right:8px}
.g div:nth-child(n+47){background:#fff}
.g div:nth-child(15){justify-content:flex-start;padding-left:10px}
.g div:nth-child(15n+2){border-right-color:#000}.g div:nth-child(2){border-right-color:#bdbdbd}
.g div:nth-child(3){background:linear-gradient(#fbd79b,#f5bd5e);color:#660033}
.g div:nth-child(16){background:#ffd38a;color:#660033;padding:0}
.g div:nth-child(18){background:#abe9da}
.g div:nth-child(15n+4){justify-content:center;padding:0}
.g div:nth-child(21),.g div:nth-child(36){padding:0}
.sb{margin-top:25px;height:15px;width:1118px;background:#f0f0f0;display:flex;align-items:center;flex:none}
.sb i{width:720px;height:15px;background:#cdcdcd}.sb span{width:17px;display:flex;justify-content:center}.sb span:last-child{margin-left:auto}`,()=>{
 const reb='<svg width="11" height="11" viewBox="0 0 11 11"><path d="M5.500 0v11M3.500 2.500v6M7.500 2.500v6M1 5.500h9M3 2.500h5q3.500 3 0 6H3q-3.500-3 0-6z" fill="none" stroke="#000" stroke-width=".9"/></svg>';
 const g1=`<svg width="200" height="60" viewBox="476 554 200 60" font-family="Liberation Sans" font-size="11.500"><path d="M574 611v-40h5v40" fill="none" stroke="#000" stroke-width="2"/><path d="M580.500 573c-4 1-4 8 0 9" fill="none" stroke="#000"/><text transform="translate(565.500 557) rotate(90)" textLength="18">135</text><text transform="translate(565.500 576) rotate(90)" textLength="20">320</text><text transform="translate(588 597) rotate(-90)" textLength="20">320</text><text transform="translate(588 576.500) rotate(-90)" textLength="19">135</text></svg>`;
 const g2=`<svg width="200" height="28" viewBox="476 615 200 28"><path d="M499 634h150" stroke="#000" stroke-width="2"/><text x="565" y="631.500" font-family="Liberation Sans" font-size="11.500" fill="#e00" textLength="24">3250</text></svg>`;
 const d=['','筋号','直径(mm)','级别','图号','图形','计算公式','公式描述','长度(mm)','根数','搭接','损耗(%)','单重(kg)','总重(kg)','钢筋归类',
 '1*','横向钢筋.1','8',reb,'0',g1,'40*d+340+40*d','端头+净长+端头','980','18','0','0','0.387','6.968','直筋',
 '2','水平纵筋.1','8',reb,'1',g2,'3250','净长','3250','2','0','0','1.284','2.568','直筋','3',...Array(14).fill('')];
 const ch=p=>`<svg width="8" height="9"><path d="${p}" fill="none" stroke="#333" stroke-width="1.800"/></svg>`;
 return `<div class="g">${d.map(t=>`<div>${t}</div>`).join('')}</div><div class="sb"><span>${ch('M6 .8L2.300 4.500 6 8.200')}</span><i></i><span>${ch('M2 .8L5.700 4.500 2 8.200')}</span></div>`});

define('detail-pane',`:host{display:flex;flex:none;height:198px;margin-top:6px;width:1134px}
.side{width:12px;flex:none;display:flex;flex-direction:column}.side i{flex:1;margin:3px 3px 2px 2px;background:radial-gradient(circle at 1.200px 1.200px,#b4b4b4 1.100px,transparent 1.400px) 0 0/4px 5px}
.m{display:flex;flex-direction:column}`,
`<div class="side"><svg width="11" height="10" style="margin:-1px 0 0 1px"><rect x=".5" y=".5" width="9" height="9" fill="#fff" stroke="#333"/><path d="M0 0h10v3H0z" fill="#8a4444"/><path d="M2 3l6 6M8 3L2 9" stroke="#111"/></svg><i></i></div>
<div class="m"><tool-row h="25"><tool-panel w="1120" m="1" style="height:24px"><tool-b i="first" m="3" w="24"></tool-b><tool-b i="prev" w="23"></tool-b><tool-b i="next" w="24"></tool-b><tool-b i="last" w="22"></tool-b><tool-sep w="6" style="height:14px"></tool-sep><tool-b i="up" w="23"></tool-b><tool-b i="down" w="24"></tool-b><tool-sep w="5" style="height:14px"></tool-sep><tool-b d i="ins" w="51">插入</tool-b><tool-b d i="del" w="51">删除</tool-b><tool-b d i="scale" w="75">缩尺配筋</tool-b><tool-b i="info" w="75">钢筋信息</tool-b><tool-b i="lib" w="75">钢筋图库</tool-b><tool-b i="other" c="2" w="61">其他</tool-b><tool-b w="33">关闭</tool-b><tool-sep w="6" style="height:14px"></tool-sep><tool-b fit="150">单构件钢筋总重(kg) : 9.535</tool-b></tool-panel></tool-row><rebar-grid></rebar-grid></div>`);

define('status-bar',`:host{display:flex;flex:none;height:22px;padding-top:2px;box-sizing:border-box;gap:3px;font-family:"Noto Sans CJK SC",sans-serif;font-feature-settings:"hwid";background:#f0f0f0}
span{border:1px solid #d2d2d2;background:${FLAT};padding-left:1px;white-space:pre;height:20px;line-height:17px;flex:none}`,
`<span style="width:148px;margin-left:0">X=77804 Y=16455</span><span style="width:77px;margin-left:-1px">层高:2.8m</span><span style="width:98px">底标高:17.55m</span><span style="width:48px;margin-left:-1px">1(1)</span><span style="width:914px">  </span><span style="width:71px;margin-left:-2px">487.9 FPS</span>`);

/* ---------- task bar ---------- */
define('task-bar',`:host{display:flex;flex:none;height:40px;background:#000c10;color:#fff;align-items:stretch}
div{display:flex;align-items:center;justify-content:center;flex:none}
.start{width:48px;background:#000}.s{width:344px;background:#333;color:#9d9d9d;font-size:14px;justify-content:flex-start;padding-left:9px}
.s svg:last-child{margin-left:auto;margin-right:12px}.s span{margin-left:5px}
.u{border-bottom:2px solid #76b9ed;padding-top:2px}.act{background:#35444a}
.two{flex-direction:column;line-height:18px}.two span{height:18px}
.n{position:relative}.n b{position:absolute;left:30px;top:17px;width:16px;height:16px;border-radius:50%;background:#3d4142;font-size:11px;line-height:16px;text-align:center}`,()=>{
 const a=(i,w,s=22,c='')=>`<div class="${c}" style="width:${w}px">${icon(i,s)}</div>`;
 return `<div class="start">${icon('win')}</div><div class="s"><svg width="22" height="22"><circle cx="11" cy="11" r="9" fill="none" stroke="#f2f2f2" stroke-width="3"/></svg><span>在这里输入你要搜索的内容</span>${icon('mic')}</div>
 ${a('tview',48,20)}${a('fan',52)}${a('e360w',51)}${a('gline',49,19)}${a('edge',59,20)}${a('ie',39,24)}<div style="width:6px"></div>${a('file',46,22)}
 <div style="width:6px"></div>${a('gblue',40,24,'u')}<div style="width:9px"></div>${a('e360',39,22,'u')}<div style="width:5px"></div>${a('app',47,22,'u act')}<div style="width:4px"></div>${a('reader',40,22,'u')}
 <div style="width:57px">链接</div><div class="two" style="width:54px"><span>29%</span><span>CPU使用</span></div>
 ${a('chev',46,15)}${a('plug',3,17)}${a('wifi',46,15)}${a('snd',1,17)}${a('kbd',54,23)}<div style="width:3px;font-size:13px;white-space:nowrap">中</div>${a('sogou',53,17)}
 <div class="two" style="width:57px"><fit-text fit="31">20:32</fit-text><fit-text fit="60">2018/4/20</fit-text></div><div class="n" style="width:55px">${icon('note',18)}<b>2</b></div><div style="width:1px;height:40px;background:#555"></div>`});

define('app-window',`:host{display:flex;flex-direction:column;width:1366px;height:768px;overflow:hidden;background:#f0f0f0}
.body{display:flex;height:622px;flex:none}.w{display:flex;flex-direction:column;width:1135px;margin-left:4px}edit-tools{margin-left:1px}snap-tools{margin-left:1px}detail-pane{margin-left:0}`,
`<title-bar></title-bar><menu-bar></menu-bar><main-tools></main-tools><div class="body"><module-nav></module-nav><div class="w"><edit-tools></edit-tools><model-view></model-view><snap-tools></snap-tools><detail-pane></detail-pane></div></div><status-bar></status-bar><task-bar></task-bar>`);
</script>
</body>
</html>
